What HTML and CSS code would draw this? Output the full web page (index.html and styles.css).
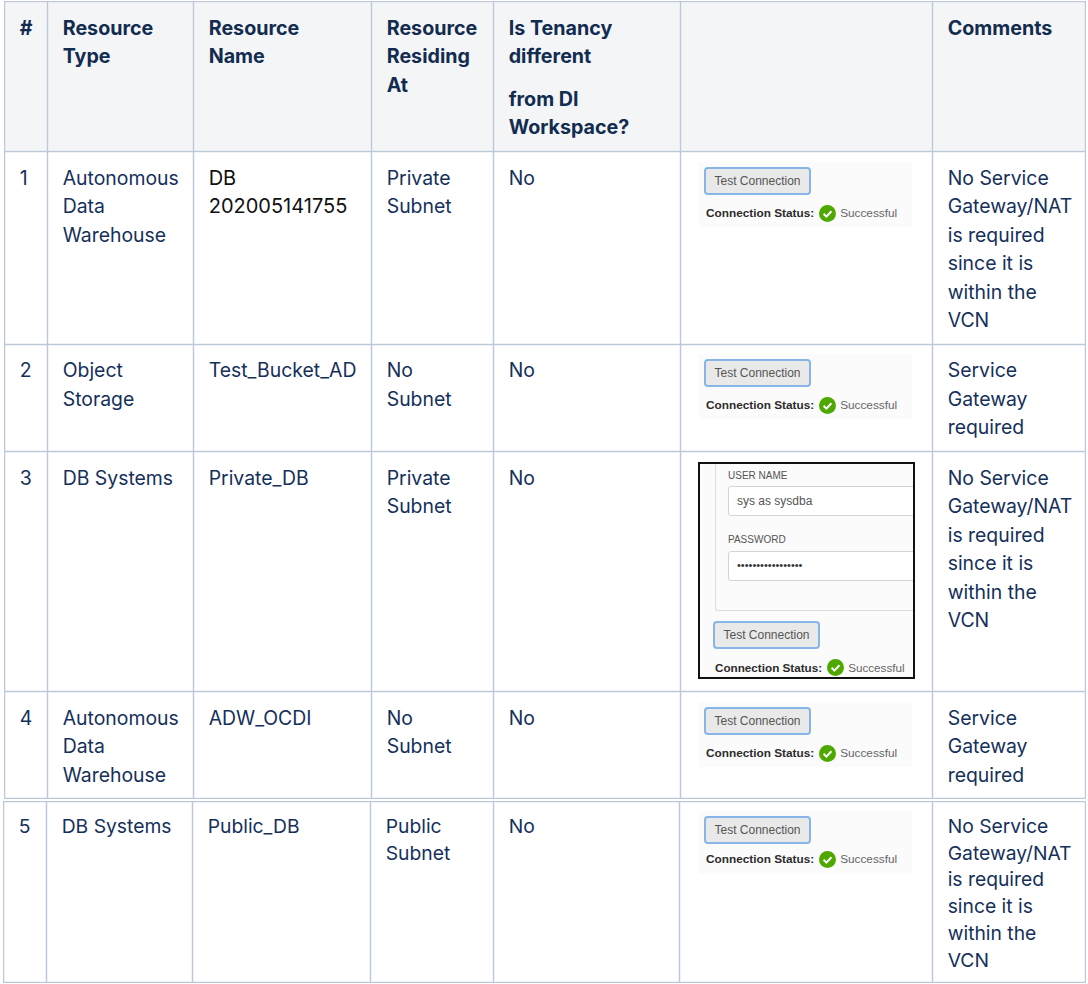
FILE: index.html
```html
<!DOCTYPE html>
<html lang="en">
<head>
<meta charset="utf-8">
<title>Resource connectivity</title>
<link rel="stylesheet" href="styles.css">
</head>
<body>
<svg class="defs" width="0" height="0" aria-hidden="true"><symbol id="ok" viewBox="0 0 17 17"><circle cx="8.5" cy="8.5" r="8.5" fill="#4fa800"/><path d="M4.6 8.8l2.8 2.8 5-5.4" fill="none" stroke="#fff" stroke-width="2"/></symbol></svg>
<table class="grid main">
<colgroup><col class="c1"><col class="c2"><col class="c3"><col class="c4"><col class="c5"><col class="c6"><col class="c7"></colgroup>
<thead>
<tr class="r0"><th>#</th><th>Resource Type</th><th>Resource Name</th><th>Resource Residing At</th><th><p>Is Tenancy different</p><p class="next">from DI Workspace?</p></th><th></th><th>Comments</th></tr>
</thead>
<tbody>
<tr class="r1"><td>1</td><td>Autonomous Data Warehouse</td><td class="black">DB 202005141755</td><td>Private Subnet</td><td>No</td>
<td class="pic"><div class="shot"><div class="btn">Test Connection</div><div class="status"><b>Connection Status:</b><svg class="ok"><use href="#ok"/></svg><span>Successful</span></div></div></td>
<td>No Service Gateway/NAT is required since it is within the VCN</td></tr>
<tr class="r2"><td>2</td><td>Object Storage</td><td>Test_Bucket_AD</td><td>No Subnet</td><td>No</td>
<td class="pic"><div class="shot"><div class="btn">Test Connection</div><div class="status"><b>Connection Status:</b><svg class="ok"><use href="#ok"/></svg><span>Successful</span></div></div></td>
<td>Service Gateway required</td></tr>
<tr class="r3"><td>3</td><td>DB Systems</td><td>Private_DB</td><td>Private Subnet</td><td>No</td>
<td class="pic"><div class="form">
<div class="panel">
<div class="lbl">USER NAME</div><div class="field">sys as sysdba</div>
<div class="lbl second">PASSWORD</div><div class="field dots">•••••••••••••••••</div>
</div>
<div class="btn inform">Test Connection</div>
<div class="status inform2"><b>Connection Status:</b><svg class="ok"><use href="#ok"/></svg><span>Successful</span></div>
</div></td>
<td>No Service Gateway/NAT is required since it is within the VCN</td></tr>
<tr class="r4"><td>4</td><td>Autonomous Data Warehouse</td><td>ADW_OCDI</td><td>No Subnet</td><td>No</td>
<td class="pic"><div class="shot"><div class="btn">Test Connection</div><div class="status"><b>Connection Status:</b><svg class="ok"><use href="#ok"/></svg><span>Successful</span></div></div></td>
<td>Service Gateway required</td></tr>
</tbody>
</table>
<table class="grid extra">
<colgroup><col class="c1"><col class="c2"><col class="c3"><col class="c4"><col class="c5"><col class="c6"><col class="c7"></colgroup>
<tbody>
<tr class="r5"><td>5</td><td>DB Systems</td><td>Public_DB</td><td>Public Subnet</td><td>No</td>
<td class="pic"><div class="shot tall"><div class="btn">Test Connection</div><div class="status"><b>Connection Status:</b><svg class="ok"><use href="#ok"/></svg><span>Successful</span></div></div></td>
<td>No Service Gateway/NAT is required since it is within the VCN</td></tr>
</tbody>
</table>
</body>
</html>
```
FILE: styles.css
```css
html, body { margin: 0; padding: 0; background: #fff; }
body { padding: 0 0 0 4px; width: 1084px; height: 984px; overflow: hidden; font-family: Inter, "Liberation Sans", sans-serif; color: #15305a; }
.defs { position: absolute; }
.grid { border-collapse: collapse; table-layout: fixed; width: 1082px; }
.c1 { width: 43px; } .c2 { width: 146px; } .c3 { width: 178px; } .c4 { width: 122px; } .c5 { width: 187px; } .c6 { width: 252px; } .c7 { width: 153px; }
.extra .c4 { width: 123px; } .extra .c5 { width: 186px; } .extra .c6 { width: 253px; }
.main { margin-top: 1px; }
.extra { margin: 2px 0 0 -1px; }
th, td { border: 1px solid #bcc8da; box-shadow: inset 0 0 0 .5px #dfe5ed; padding: 11.5px 14px 0 14.7px; vertical-align: top; text-align: left; font-size: 19.4px; line-height: 28.6px; font-weight: 400; color: #15305a; }
th { background: #f4f5f7; font-size: 19.7px; font-weight: 700; color: #122c50; }
th p { margin: 0; }
th p.next { margin-top: 14px; }
.r0 { height: 150px; } .r1 { height: 193px; } .r2 { height: 107px; } .r3 { height: 240px; } .r4 { height: 107px; } .r5 { height: 181px; }
.r2 td { padding-top: 11px; }
.r5 td { padding-top: 11px; line-height: 26.7px; font-size: 19.3px; }
td.black { color: #111; font-size: 20px; }
td.pic { padding: 10px 0 0 18px; }
.r2 td.pic { padding-top: 9px; }
.r3 td.pic { padding-left: 17px; }
.r5 td.pic { padding: 9px 0 0 19px; }
.shot { width: 213px; height: 65px; background: #fbfbfb; padding: 5px 0 0 5px; box-sizing: border-box; font-family: "Liberation Sans", Arial, sans-serif; }
.shot.tall { height: 63px; padding-left: 5px; }
.shot.tall .status { margin-top: 7px; }
.btn { width: 107px; height: 28px; box-sizing: border-box; border: 2px solid #86b6e8; border-radius: 4px; background: #e9e9e9; color: #555; font: 12px/24px "Liberation Sans", Arial, sans-serif; text-align: center; }
.status { display: flex; align-items: center; margin: 10px 0 0 2px; font: 11.8px/17px "Liberation Sans", Arial, sans-serif; color: #666; white-space: nowrap; }
.status b { color: #2b2b2b; }
.ok { width: 17px; height: 17px; margin: 0 4px 0 5px; flex: none; }
.form { width: 217px; height: 217px; box-sizing: border-box; border: 2px solid #111; background: #fbfbfb; overflow: hidden; font-family: "Liberation Sans", Arial, sans-serif; }
.panel { margin-left: 15px; width: 240px; height: 147px; box-sizing: border-box; border: 1px solid #dcdcdc; border-top: 0; border-radius: 0 0 3px 3px; padding: 5px 0 0 12px; }
.lbl { font-size: 10px; line-height: 14px; color: #555; }
.lbl.second { margin-top: 17px; }
.field { margin-top: 3px; width: 240px; height: 30px; box-sizing: border-box; border: 1px solid #d4d4d4; border-radius: 3px; background: #fff; padding-left: 8px; font-size: 12px; line-height: 28px; color: #555; }
.field.dots { margin-top: 4px; font-size: 11px; line-height: 27px; color: #333; }
.btn.inform { margin: 10px 0 0 13px; }
.status.inform2 { margin: 10px 0 0 15px; font-size: 11.7px; }
```
